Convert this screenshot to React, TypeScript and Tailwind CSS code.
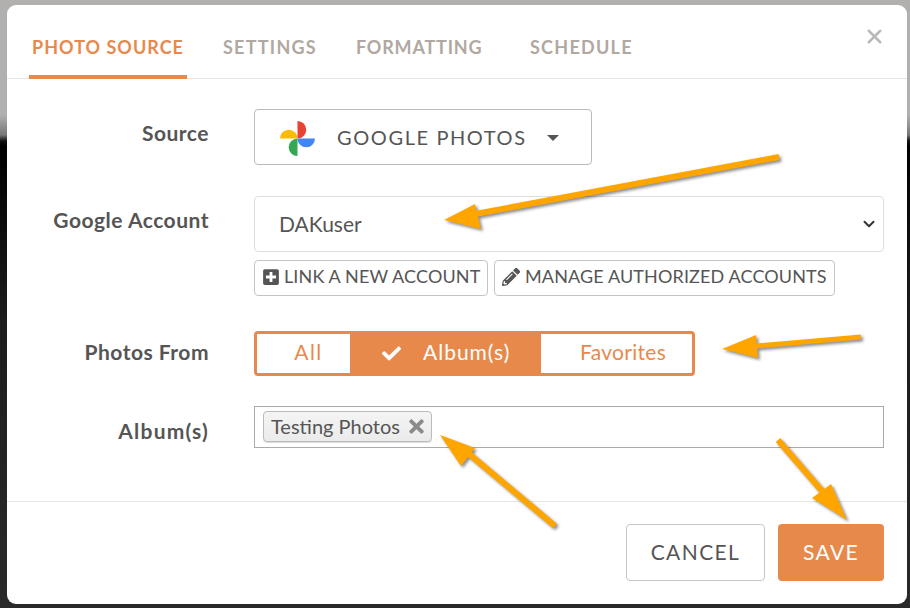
import { FaCheck, FaPencilAlt, FaPlusSquare, FaTimes } from "react-icons/fa";
import { ChevronDown, X } from "lucide-react";

function GooglePhotos() {
  return (
    <svg width="35" height="35" viewBox="0 0 34 34" className="mt-[3px] shrink-0">
      <path d="M17 0A8.5 8.5 0 0 1 17 17Z" fill="#e94235" />
      <path d="M0 17A8.5 8.5 0 0 1 17 17Z" fill="#fabb05" />
      <path d="M34 17A8.5 8.5 0 0 1 17 17Z" fill="#4285f4" />
      <path d="M17 34A8.5 8.5 0 0 1 17 17Z" fill="#34a853" />
    </svg>
  );
}

function Arrows() {
  return (
    <svg
      width="910"
      height="608"
      viewBox="0 0 910 608"
      className="absolute left-0 top-0 pointer-events-none drop-shadow-[2px_2px_1.5px_rgba(0,0,0,0.45)]"
    >
      <g fill="#ffa500" stroke="#ffa500">
        <line x1="779" y1="157" x2="470" y2="215" strokeWidth="6" />
        <polygon points="444,220 475,204 481,229" strokeWidth="0" />
        <line x1="861" y1="337" x2="745" y2="347" strokeWidth="5" />
        <polygon points="722,349 756,335 758,358" strokeWidth="0" />
        <line x1="555" y1="526" x2="462" y2="448" strokeWidth="6" />
        <polygon points="440,435 475,448 461,466" strokeWidth="0" />
        <line x1="778" y1="440" x2="828" y2="498" strokeWidth="6" />
        <polygon points="847,520 812,498 831,484" strokeWidth="0" />
      </g>
    </svg>
  );
}

const tabBase = "text-[18px] font-bold leading-none whitespace-nowrap";
const labelBase = "w-[202px] text-right text-[21px] font-bold leading-[24px] text-[#555]";

export default function App() {
  return (
    <div className="relative w-[910px] h-[608px] overflow-hidden bg-[linear-gradient(180deg,#b1b0ae_0px,#b1b0ae_115px,#777_135px,#111_141px,#000_146px,#1c1c1c_320px,#2a2a2a_608px)] pt-[5px] px-[7px] font-['Lato','Open_Sans',sans-serif] text-[#555]">
      <div className="relative flex h-[599px] w-[900px] flex-col rounded-[9px] bg-white">
        <div className="relative flex h-[74px] shrink-0 items-end border-b border-[#e3e3e3] pl-[22px]">
          <div className={`${tabBase} -mb-px flex h-[59px] w-[158px] items-start justify-center border-b-4 border-[#e8894c] pt-[18px] tracking-[1px] text-[#e8894c]`}>
            PHOTO SOURCE
          </div>
          <div className={`${tabBase} ml-[36px] h-[58px] w-[93px] pt-[18px] tracking-[1.25px] text-[#b0a8a1]`}>SETTINGS</div>
          <div className={`${tabBase} ml-[40px] h-[58px] w-[126px] pt-[18px] tracking-[0.8px] text-[#b0a8a1]`}>FORMATTING</div>
          <div className={`${tabBase} ml-[48px] h-[58px] pt-[18px] tracking-[1.25px] text-[#b0a8a1]`}>SCHEDULE</div>
          <X className="absolute right-[21px] top-[20px] text-[#b9b9b9]" size={23} strokeWidth={2.6} />
        </div>

        <div className="flex flex-1 flex-col pr-[23px] pt-[30px]">
          <div className="flex h-[56px] items-start">
            <label className={`${labelBase} pt-[12px] tracking-[0.5px]`}>Source</label>
            <div className="ml-[45px] flex h-[56px] w-[338px] items-center rounded border border-[#bbb] pl-[25px] text-[20px] tracking-[1.6px]">
              <GooglePhotos />
              <span className="ml-[22px]">GOOGLE PHOTOS</span>
              <span className="ml-[20px] mt-[2px] h-0 w-0 border-x-[6px] border-t-[6px] border-x-transparent border-t-[#555]" />
            </div>
          </div>

          <div className="mt-[31px] flex items-start">
            <label className={`${labelBase} pt-[12px] tracking-[0.5px]`}>Google Account</label>
            <div className="ml-[45px] flex-1">
              <div className="flex h-[56px] items-center justify-between rounded border border-[#dedede] pl-[24px] pr-[5px] text-[21px]">
                <span>DAKuser</span>
                <ChevronDown size={18} strokeWidth={2.6} className="text-[#333]" />
              </div>
              <div className="mt-[8px] flex gap-[6px] text-[18px] leading-none tracking-[0.13px]">
                <div className="flex h-[36px] w-[234px] items-center gap-[4px] rounded border border-[#c4c4c4] pl-[7px]">
                  <FaPlusSquare size={18} className="-mt-[3px] shrink-0" />
                  <span className="-mt-[5px] whitespace-nowrap">LINK A NEW ACCOUNT</span>
                </div>
                <div className="flex h-[36px] w-[341px] items-center gap-[5px] rounded border border-[#c4c4c4] pl-[7px]">
                  <FaPencilAlt size={18} className="-mt-[3px] shrink-0" />
                  <span className="-mt-[5px] whitespace-nowrap">MANAGE AUTHORIZED ACCOUNTS</span>
                </div>
              </div>
            </div>
          </div>

          <div className="mt-[35px] flex items-center">
            <label className={`${labelBase} -mt-[3px] tracking-[0.5px]`}>Photos From</label>
            <div className="ml-[45px] flex h-[45px] w-[441px] rounded border-[3px] border-[#e8894c] text-[21px] tracking-[0.3px] text-[#e8894c]">
              <div className="flex w-[93px] items-center justify-center pb-[3px] pl-[10px] tracking-[1.5px]">All</div>
              <div className="flex w-[191px] items-center bg-[#e8894c] pl-[32px] text-white">
                <FaCheck size={19} />
                <span className="ml-[22px] pb-[3px] tracking-[1px]">Album(s)</span>
              </div>
              <div className="flex flex-1 items-center pb-[3px] pl-[39px]">Favorites</div>
            </div>
          </div>

          <div className="mt-[30px] flex items-start">
            <label className={`${labelBase} pt-[13px] tracking-[1.2px]`}>Album(s)</label>
            <div className="ml-[45px] flex h-[42px] flex-1 items-start border border-[#aaa] pl-[8px] pt-[4px]">
              <div className="flex h-[31px] w-[169px] items-center rounded-[4px] border border-[#bbb] bg-[linear-gradient(180deg,#f4f4f4,#ebebeb)] pl-[7px] text-[20px] shadow-[0_1px_0_#ddd]">
                <span className="-mt-[2px] whitespace-nowrap">Testing Photos</span>
                <FaTimes size={21} className="ml-[6px] text-[#8a8a8a]" />
              </div>
            </div>
          </div>
        </div>

        <div className="flex h-[103px] shrink-0 items-start justify-end gap-[13px] border-t border-[#e5e5e5] pr-[23px] pt-[22px] text-[21px] tracking-[1.4px]">
          <button className="h-[57px] w-[139px] rounded border border-[#c6c6c6] pb-[2px] text-[#555]">CANCEL</button>
          <button className="h-[57px] w-[106px] rounded bg-[#e8894c] pb-[2px] text-white">SAVE</button>
        </div>
      </div>
      <Arrows />
    </div>
  );
}
